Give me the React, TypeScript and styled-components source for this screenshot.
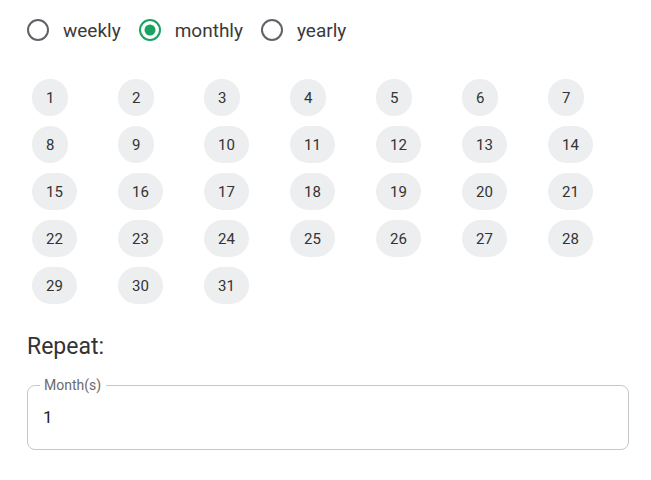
import React from "react";
import styled, { createGlobalStyle } from "styled-components";

const Global = createGlobalStyle`
  body {
    margin: 0;
    background: #ffffff;
    font-family: Roboto, "Liberation Sans", sans-serif;
    color: #333333;
  }
`;

const Page = styled.div`
  padding: 13px 22px 0 26px;
`;

const RadioRow = styled.div`
  display: flex;
  align-items: center;
  gap: 17px;
  height: 34px;
`;

const RadioLabel = styled.label`
  display: flex;
  align-items: center;
  gap: 13px;
  font-size: 19px;
  color: #3a3a3a;
  cursor: pointer;
`;

const DayGrid = styled.div`
  display: grid;
  grid-template-columns: repeat(7, 86px);
  row-gap: 10px;
  margin: 32px 0 0 6px;
`;

const Chip = styled.div<{ $active?: boolean }>`
  justify-self: start;
  height: 37px;
  min-width: 36px;
  box-sizing: border-box;
  padding: 0 14px;
  border-radius: 19px;
  background: ${(p) => (p.$active ? "#1aa260" : "#eceef0")};
  color: ${(p) => (p.$active ? "#fff" : "#333")};
  font-size: 15px;
  display: flex;
  align-items: center;
  justify-content: center;
`;

const Heading = styled.div`
  margin: 29px 0 0 1px;
  font-size: 23px;
  color: #333;
  line-height: 28px;
`;

const Field = styled.fieldset`
  margin: 17px 0 0 1px;
  padding: 0 15px;
  height: 72px;
  box-sizing: border-box;
  border: 1px solid #c8c8c8;
  border-radius: 8px;
  width: 602px;
`;

const Legend = styled.legend`
  padding: 0 5px 0 4px;
  margin-left: -3px;
  font-size: 14px;
  color: #6b6b6b;
  line-height: 14px;
`;

const Value = styled.div`
  font-size: 17px;
  color: #222;
  line-height: 20px;
  margin-top: 15px;
`;

const Radio: React.FC<{ checked?: boolean; label: string }> = ({ checked, label }) => (
  <RadioLabel>
    <svg width="24" height="24" viewBox="0 0 24 24">
      <circle
        cx="12"
        cy="12"
        r="10"
        fill="none"
        stroke={checked ? "#1aa260" : "#5f6368"}
        strokeWidth="2"
      />
      {checked && <circle cx="12" cy="12" r="5.5" fill="#1aa260" />}
    </svg>
    {label}
  </RadioLabel>
);

const days = Array.from({ length: 31 }, (_, i) => i + 1);

const App: React.FC = () => (
  <>
    <Global />
    <Page>
      <RadioRow>
        <Radio label="weekly" />
        <Radio label="monthly" checked />
        <Radio label="yearly" />
      </RadioRow>
      <DayGrid>
        {days.map((d) => (
          <Chip key={d}>{d}</Chip>
        ))}
      </DayGrid>
      <Heading>Repeat:</Heading>
      <Field>
        <Legend>Month(s)</Legend>
        <Value>1</Value>
      </Field>
    </Page>
  </>
);

export default App;
